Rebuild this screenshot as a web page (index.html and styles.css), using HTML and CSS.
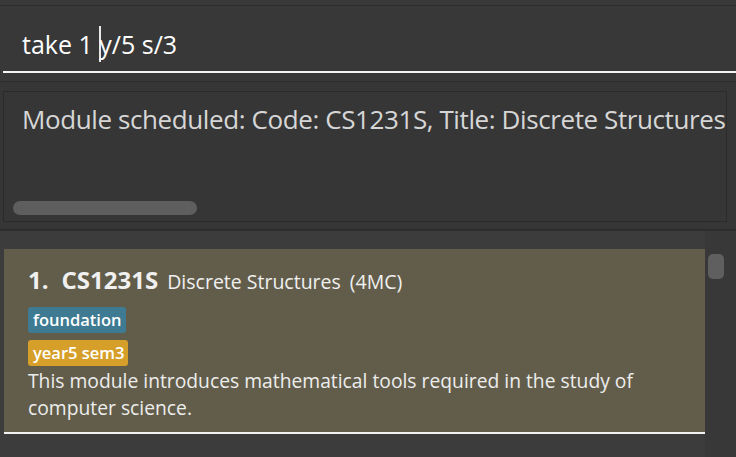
FILE: index.html
```html
<!DOCTYPE html>
<html>
<head>
<meta charset="utf-8">
<link rel="stylesheet" href="styles.css">
</head>
<body>
<div class="app">
  <div class="top-strip"></div>
  <div class="command-pane">
    <div class="command-box">
      <span class="cmd-text">take 1 </span><span class="caret"></span><span class="cmd-text">y/5 s/3</span>
    </div>
  </div>
  <div class="gap-strip"></div>
  <div class="result-pane">
    <div class="result-box">
      <div class="result-text">Module scheduled: Code: CS1231S, Title: Discrete Structures</div>
      <div class="hscroll"><div class="hthumb"></div></div>
    </div>
  </div>
  <div class="list-pane">
    <div class="list-col">
      <div class="card">
        <div class="card-head">
          <span class="idx">1.</span>
          <span class="code">CS1231S</span>
          <span class="title">Discrete Structures</span>
          <span class="mc">(4MC)</span>
        </div>
        <div class="tags">
          <span class="tag tag-blue">foundation</span>
          <span class="tag tag-yellow">year5 sem3</span>
        </div>
        <div class="desc">This module introduces mathematical tools required in the study of computer science.</div>
      </div>
    </div>
    <div class="vscroll"><div class="vthumb"></div></div>
  </div>
</div>
</body>
</html>
```
FILE: styles.css
```css
html, body {
  margin: 0;
  padding: 0;
  background: #383838;
  font-family: "Open Sans", "Noto Sans", sans-serif;
  overflow: hidden;
}
.app {
  width: 736px;
  height: 457px;
  display: flex;
  flex-direction: column;
}
.top-strip {
  height: 5px;
  background: #393939;
  border-bottom: 1px solid #2d2d2d;
}
.command-pane {
  height: 67px;
  padding-left: 3px;
  box-sizing: border-box;
  background: #383838;
}
.command-box {
  height: 67px;
  border-bottom: 2px solid #f4f4f4;
  display: flex;
  align-items: center;
  padding-left: 19px;
  padding-top: 11px;
  box-sizing: border-box;
  color: #ffffff;
  font-size: 25px;
  white-space: pre;
}
.caret {
  width: 2px;
  height: 36px;
  background: #e8e8e8;
  margin-left: 0;
  margin-right: -2px;
}
.gap-strip {
  height: 8px;
  background: #383838;
  border-bottom: 1px solid #2d2d2d;
}
.result-pane {
  height: 148px;
  padding: 9px 9px 0 3px;
  box-sizing: border-box;
  background: #363636;
  border-bottom: 1px solid #2c2c2c;
}
.result-box {
  height: 131px;
  border: 1px solid #2b2b2b;
  box-sizing: border-box;
  display: flex;
  flex-direction: column;
  justify-content: space-between;
  padding: 9px 0 6px 9px;
  overflow: hidden;
}
.result-text {
  color: #d6d6d6;
  font-size: 26px;
  letter-spacing: -0.4px;
  white-space: nowrap;
  padding-left: 9px;
}
.hscroll {
  height: 14px;
}
.hthumb {
  width: 184px;
  height: 14px;
  border-radius: 7px;
  background: #5e5e5e;
}
.list-pane {
  flex: 1;
  display: flex;
  background: #3c3c3c;
  border-top: 1px solid #2f2f2f;
}
.list-col {
  width: 705px;
  padding-top: 18px;
  padding-left: 3px;
  box-sizing: border-box;
  background: #3c3c3c;
}
.card {
  height: 185px;
  box-sizing: border-box;
  margin-left: 1px;
  width: 701px;
  background: #625d4a;
  border-bottom: 2px solid #f2f2f2;
  padding: 16px 0 0 24px;
  color: #f0f0f0;
}
.card-head {
  display: flex;
  align-items: baseline;
  white-space: nowrap;
  line-height: 30px;
}
.idx {
  font-size: 24px;
  font-weight: 700;
  margin-right: 13px;
}
.code {
  font-size: 24px;
  font-weight: 700;
  margin-right: 9px;
}
.title {
  font-size: 19.5px;
  margin-right: 9px;
}
.mc {
  font-size: 19.5px;
}
.tags {
  display: flex;
  flex-direction: column;
  align-items: flex-start;
  gap: 7px;
  margin-top: 10px;
}
.tag {
  font-size: 16.5px;
  font-weight: 600;
  color: #ffffff;
  padding: 1px 4px 1px 5px;
  border-radius: 3px;
  line-height: 24px;
}
.tag-blue {
  background: #3e7b92;
}
.tag-yellow {
  background: #d69f29;
}
.desc {
  font-size: 19.3px;
  line-height: 27px;
  padding-right: 40px;
  color: #ededed;
  margin-top: 1px;
}
.vscroll {
  flex: 1;
  padding: 23px 0 0 3px;
  background: #383838;
}
.vthumb {
  width: 16px;
  height: 25px;
  border-radius: 5px;
  background: #5f5f5f;
}
```
